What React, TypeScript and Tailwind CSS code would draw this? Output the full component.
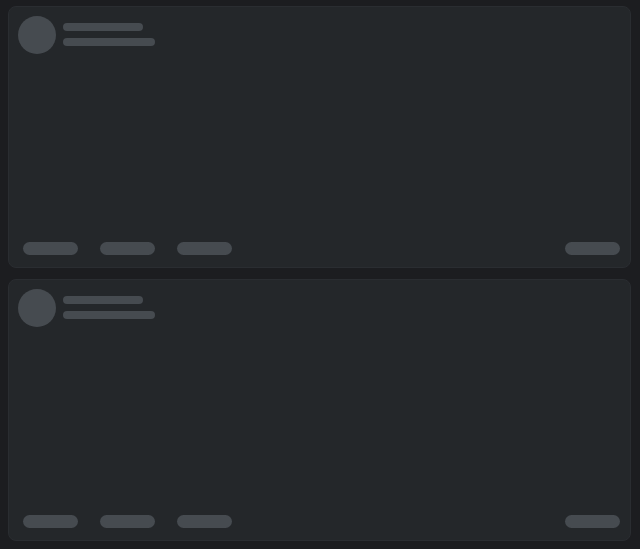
import React from 'react';

// placeholder card shown while posts are loading
const SkeletonCard: React.FC = () => {
  return (
    <div className="h-[262px] rounded-lg bg-[#24272a] border border-[#2a2d31] flex flex-col justify-between pl-[9px] pr-[10px] pt-[9px] pb-[12px]">
      <div className="flex items-start gap-[7px]">
        <div className="w-[38px] h-[38px] rounded-full bg-[#464b50]" />
        <div className="flex flex-col gap-[7px] pt-[7px]">
          <div className="w-[80px] h-[8px] rounded-full bg-[#464b50]" />
          <div className="w-[92px] h-[8px] rounded-full bg-[#464b50]" />
        </div>
      </div>
      <div className="flex items-center pl-[5px]">
        <div className="flex gap-[22px]">
          <div className="w-[55px] h-[13px] rounded-full bg-[#464b50]" />
          <div className="w-[55px] h-[13px] rounded-full bg-[#464b50]" />
          <div className="w-[55px] h-[13px] rounded-full bg-[#464b50]" />
        </div>
        <div className="ml-auto w-[55px] h-[13px] rounded-full bg-[#464b50]" />
      </div>
    </div>
  );
};

const App: React.FC = () => {
  return (
    <div className="min-h-screen bg-[#1c1d20] pt-[6px] pl-[8px] pr-[9px] pb-[8px] flex flex-col gap-[11px]">
      <SkeletonCard />
      <SkeletonCard />
    </div>
  );
};

export default App;
